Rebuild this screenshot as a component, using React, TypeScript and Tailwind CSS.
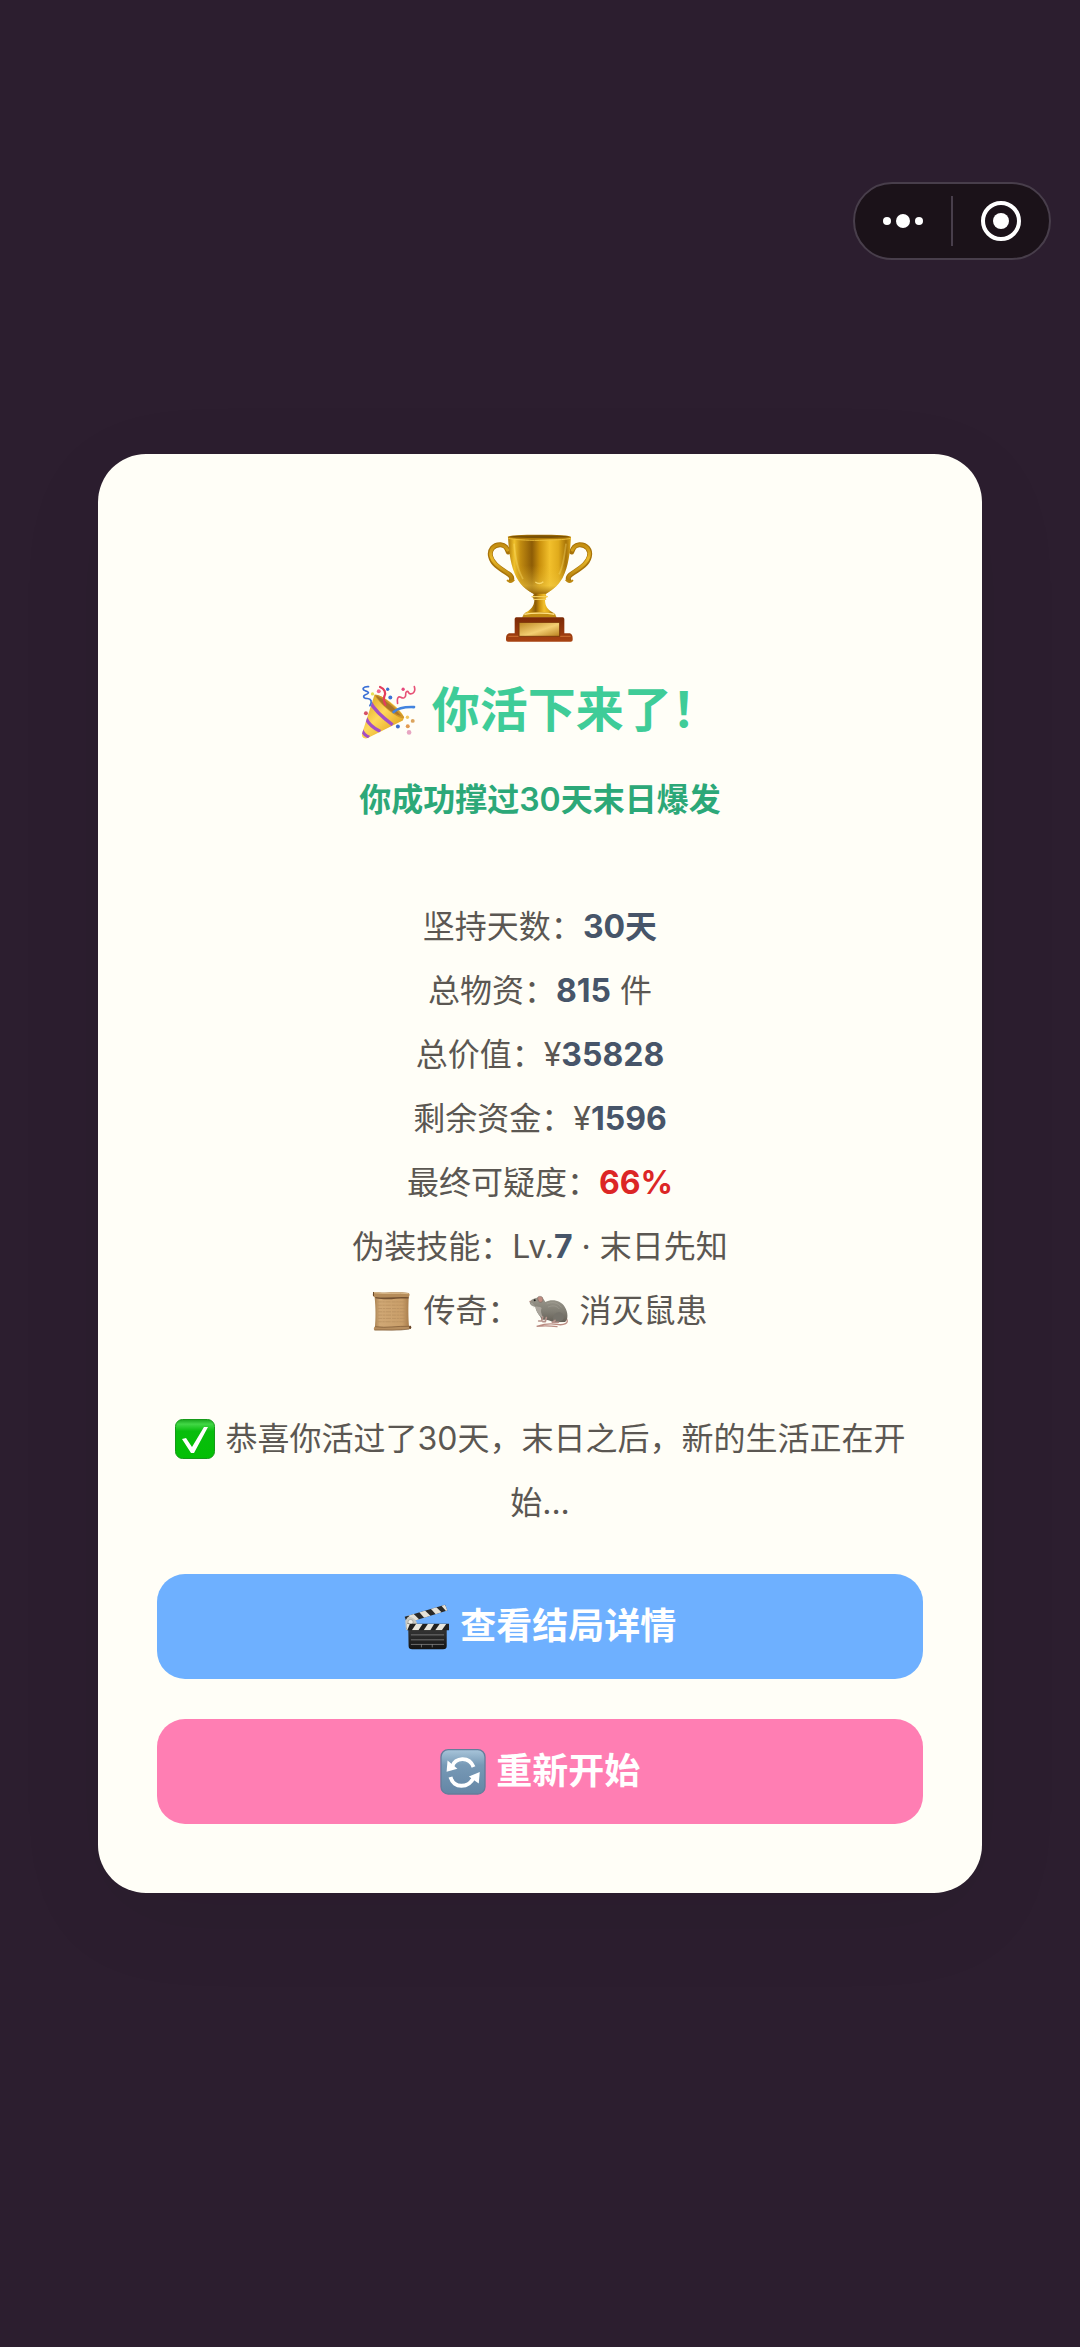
import React from "react";

interface IconProps {
  className?: string;
}

interface Stat {
  label: string;
  value: React.ReactNode;
}

const TrophyIcon: React.FC<IconProps> = ({ className }) => (
  <svg viewBox="46 40 324 330" className={className} aria-hidden="true">
    <defs>
      <linearGradient id="cup" x1="0" x2="1">
        <stop offset="0" stopColor="#b07a08" />
        <stop offset="0.1" stopColor="#f0c12c" />
        <stop offset="0.2" stopColor="#c18b10" />
        <stop offset="0.38" stopColor="#8d5c06" />
        <stop offset="0.5" stopColor="#c98f0c" />
        <stop offset="0.66" stopColor="#f2c02c" />
        <stop offset="0.8" stopColor="#e0ab1c" />
        <stop offset="0.92" stopColor="#a87407" />
        <stop offset="1" stopColor="#d9a31a" />
      </linearGradient>
      <linearGradient id="cupShade" x1="0" x2="0" y1="0" y2="1">
        <stop offset="0.5" stopColor="#e8b824" stopOpacity="0" />
        <stop offset="0.85" stopColor="#f3cc46" stopOpacity="0.5" />
        <stop offset="1" stopColor="#8f5f06" stopOpacity="0.8" />
      </linearGradient>
      <linearGradient id="handle" x1="0" x2="0" y1="0" y2="1">
        <stop offset="0" stopColor="#c38d10" />
        <stop offset="0.4" stopColor="#e9b929" />
        <stop offset="1" stopColor="#b27c0a" />
      </linearGradient>
      <linearGradient id="plate" x1="0" x2="1" y1="0" y2="1">
        <stop offset="0" stopColor="#bb8420" />
        <stop offset="0.55" stopColor="#f3cf72" />
        <stop offset="1" stopColor="#b87f1c" />
      </linearGradient>
      <linearGradient id="wood" x1="0" x2="0" y1="0" y2="1">
        <stop offset="0" stopColor="#7c2a06" />
        <stop offset="1" stopColor="#a84312" />
      </linearGradient>
    </defs>
    <g fill="none" strokeLinecap="round" strokeLinejoin="round">
      <path d="M113 97 C108 84 104 76 90 75 C68 74 55 92 60 111 C65 132 84 145 106 158 C120 166 126 174 122 181" stroke="#a87309" strokeWidth="15" />
      <path d="M111 91 C105 79 99 75 88 75 C69 75 56 92 61 110 C66 130 84 143 106 156 C120 165 124 174 121 180" stroke="url(#handle)" strokeWidth="9" />
      <path d="M303 97 C308 84 312 76 326 75 C348 74 361 92 356 111 C351 132 332 145 310 158 C296 166 290 174 294 181" stroke="#a87309" strokeWidth="15" />
      <path d="M305 91 C311 79 317 75 328 75 C347 75 360 92 355 110 C350 130 332 143 310 156 C296 165 292 174 295 180" stroke="url(#handle)" strokeWidth="9" />
      <path d="M111 183 C116 188 123 187 129 182 M305 183 C300 188 293 187 287 182" stroke="#bc870e" strokeWidth="6" />
    </g>
    <path d="M112 52 H301 C298 100 294 140 276 174 C260 203 237 215 225 223 H190 C176 215 153 203 138 174 C120 140 115 100 112 52Z" fill="url(#cup)" />
    <path d="M112 52 H301 C298 100 294 140 276 174 C260 203 237 215 225 223 H190 C176 215 153 203 138 174 C120 140 115 100 112 52Z" fill="url(#cupShade)" />
    <path d="M130 72 C134 115 139 149 157 178 M286 72 C281 115 277 143 265 164" fill="none" stroke="#ffe373" strokeWidth="5" opacity="0.35" />
    <path d="M194 187 C202 193 211 192 218 186" fill="none" stroke="#ffe27a" strokeWidth="4" opacity="0.8" />
    <ellipse cx="206" cy="52" rx="95" ry="7" fill="#ae7908" />
    <ellipse cx="206" cy="51" rx="88" ry="4" fill="#7a5105" />
    <path d="M113 56 C145 64 266 64 300 56" fill="none" stroke="#edbf3a" strokeWidth="3" />
    <path d="M190 222 H225 L228 232 L223 240 C223 260 231 270 251 281 H161 C180 270 191 260 191 240 L185 232Z" fill="url(#cup)" />
    <path d="M184 231 H230 M190 239 H225" stroke="#f4cf5c" strokeWidth="4" strokeLinecap="round" />
    <path d="M160 282 C180 276 232 276 253 282 L258 294 H154Z" fill="#c28c12" />
    <path d="M161 284 C184 279 229 279 251 284" fill="none" stroke="#ffe185" strokeWidth="4" />
    <path d="M137 293 H276 Q281 293 281 298 V341 H298 Q306 344 306 356 V361 Q306 366 300 366 H112 Q106 366 106 361 V356 Q106 344 115 341 H132 V298 Q132 293 137 293Z" fill="url(#wood)" />
    <path d="M113 350 H300" stroke="#c5662a" strokeWidth="4" />
    <rect x="145" y="308" width="122" height="42" fill="url(#plate)" stroke="#7c3709" strokeWidth="3" />
  </svg>
);

const PartyIcon: React.FC<IconProps> = ({ className }) => (
  <svg viewBox="60 64 170 168" className={className} aria-hidden="true">
    <defs>
      <linearGradient id="cone" x1="0" x2="1" y1="0" y2="1">
        <stop offset="0" stopColor="#d39a14" />
        <stop offset="0.45" stopColor="#ffd95c" />
        <stop offset="0.75" stopColor="#e8b02c" />
        <stop offset="1" stopColor="#8f5a17" />
      </linearGradient>
      <clipPath id="coneClip">
        <path d="M104 96 C126 94 180 133 194 164 L190 174 L85 226 C74 232 64 225 66 214Z" />
      </clipPath>
    </defs>
    <path d="M104 96 C126 94 180 133 194 164 L190 174 L85 226 C74 232 64 225 66 214Z" fill="url(#cone)" />
    <g clipPath="url(#coneClip)" fill="none" stroke="#a34fc4" strokeWidth="10">
      <path d="M91 118 C104 142 128 164 159 187" />
      <path d="M77 165 C85 183 100 197 122 207" />
      <path d="M65 202 C70 214 77 220 88 225" />
    </g>
    <path d="M104 96 C117 90 166 124 194 164 C189 181 118 126 104 96Z" fill="#cf962a" />
    <path d="M108 99 C120 100 162 130 184 160 C160 156 120 120 108 99Z" fill="#a8742a" />
    <g fill="none" strokeLinecap="round">
      <path d="M86 71 C70 70 64 79 75 83 C88 87 89 91 78 95 C67 99 70 107 82 107 C94 108 98 116 90 129" stroke="#3b70d6" strokeWidth="5" />
      <path d="M121 72 C136 78 139 90 134 100 C131 108 133 118 137 126" stroke="#e43e5d" strokeWidth="7" />
      <path d="M225 71 C229 84 223 93 214 93 C205 94 209 83 202 86 C194 90 204 101 194 105 C184 108 181 96 175 105 C172 110 174 116 174 122" stroke="#e75176" strokeWidth="5" />
      <path d="M162 148 C176 135 199 132 224 133" stroke="#4384df" strokeWidth="8" />
    </g>
    <circle cx="144" cy="79" r="5" fill="#396fd2" />
    <circle cx="152" cy="104" r="6" fill="#3d72d7" />
    <circle cx="191" cy="79" r="5" fill="#e6497c" />
    <circle cx="117" cy="85" r="6" fill="#f06a91" />
    <circle cx="98" cy="93" r="5" fill="#e7df55" />
    <circle cx="78" cy="152" r="6" fill="#d65266" />
    <circle cx="204" cy="164" r="5" fill="#f2c65d" />
    <circle cx="220" cy="175" r="6" fill="#dba45e" />
    <circle cx="205" cy="191" r="6" fill="#e29a50" />
    <circle cx="175" cy="192" r="6" fill="#3b6acb" />
    <circle cx="209" cy="210" r="7" fill="#e7a6c2" />
  </svg>
);

const ScrollIcon: React.FC<IconProps> = ({ className }) => (
  <svg viewBox="110 448 120 121" className={className} aria-hidden="true">
    <defs>
      <linearGradient id="paper" x1="0" x2="1">
        <stop offset="0" stopColor="#a98251" />
        <stop offset="0.15" stopColor="#d0a875" />
        <stop offset="0.8" stopColor="#c99e69" />
        <stop offset="1" stopColor="#a77c4b" />
      </linearGradient>
    </defs>
    <path d="M117 462 L221 459 C219 490 219 530 222 560 L118 562 C121 530 121 500 117 462Z" fill="url(#paper)" />
    <path d="M127 481 H212 M127 491 H212 M128 501 H212 M128 511 H212 M128 521 H212 M128 531 H212 M127 541 H213" stroke="#b58d5e" strokeWidth="2" strokeDasharray="12 2 7 2 16 3" />
    <path d="M114 451 C145 454 190 450 221 454 Q226 459 221 466 C188 463 155 472 119 467 Q111 466 112 457Z" fill="#b58c5a" />
    <path d="M119 466 C155 471 188 464 221 467 L220 471 C188 469 158 477 120 470Z" fill="#735131" />
    <path d="M114 453 C145 458 190 453 220 456" fill="none" stroke="#dab98a" strokeWidth="3" />
    <path d="M114 451 V463" stroke="#6c4928" strokeWidth="3" />
    <path d="M119 555 C155 561 190 553 226 553 Q231 559 225 563 C190 569 150 565 117 567 Q112 561 119 555Z" fill="#b78e5e" />
    <path d="M119 556 C152 561 188 553 223 555 M117 566 C150 565 190 569 222 563" fill="none" stroke="#7a5633" strokeWidth="2" />
    <ellipse cx="225" cy="558" rx="3" ry="5" fill="#68452a" />
  </svg>
);

const RatIcon: React.FC<IconProps> = ({ className }) => (
  <svg viewBox="560 456 120 120" className={className} aria-hidden="true">
    <defs>
      <linearGradient id="fur" x1="0" x2="0" y1="0" y2="1">
        <stop offset="0" stopColor="#9a978c" />
        <stop offset="0.55" stopColor="#817e74" />
        <stop offset="1" stopColor="#645f56" />
      </linearGradient>
    </defs>
    <path d="M670 535 C685 554 663 560 642 556 C620 552 602 556 583 562 C604 560 620 560 644 563" fill="none" stroke="#ba8b81" strokeWidth="4" strokeLinecap="round" />
    <path d="M562 488 C566 481 577 476 589 476 C601 475 606 482 609 489 C631 478 657 486 667 503 C678 521 678 541 668 549 L633 550 C619 541 608 543 598 542 L594 533 C586 524 580 513 579 504 C572 501 562 499 562 488Z" fill="url(#fur)" />
    <path d="M579 502 C585 504 592 502 598 507 C594 514 596 525 603 536 L596 534 C586 525 581 514 579 502Z" fill="#aaa59c" />
    <path d="M632 544 C630 522 651 513 662 526 C669 537 662 546 650 548Z" fill="#75726a" />
    <path d="M601 534 L598 546 H589 M612 536 L609 548 H602 M638 544 L630 550 H648" fill="none" stroke="#b6928a" strokeWidth="5" strokeLinecap="round" strokeLinejoin="round" />
    <path d="M586 478 C584 472 596 470 600 475 C604 482 601 489 596 490 C590 491 587 485 586 478Z" fill="#bd8c80" stroke="#7d6c65" strokeWidth="2" />
    <circle cx="577" cy="484" r="3" fill="#181716" />
    <circle cx="563" cy="487" r="2" fill="#b6817d" />
    <path d="M613 495 C630 487 648 491 657 505 M617 504 C632 498 643 500 651 510" fill="none" stroke="#aaa69c" strokeWidth="2" opacity="0.7" />
    <path d="M566 491 L575 507 M569 492 L581 508" stroke="#c9c5bb" strokeWidth="1" />
  </svg>
);

const CheckIcon: React.FC<IconProps> = ({ className }) => (
  <svg viewBox="0 0 40 40" className={className} aria-hidden="true">
    <defs>
      <linearGradient id="green" x1="0" x2="0" y1="0" y2="1">
        <stop offset="0" stopColor="#18a51d" />
        <stop offset="0.12" stopColor="#42d746" />
        <stop offset="0.3" stopColor="#08bd0d" />
        <stop offset="1" stopColor="#04bf04" />
      </linearGradient>
    </defs>
    <rect x="0.5" y="0.5" width="39" height="39" rx="7" fill="url(#green)" stroke="#159a19" />
    <path d="M7 20 L11 19 L17 28 L29 8 L33 8 L19 34 L16 34Z" fill="#fff" />
  </svg>
);

const ClapperIcon: React.FC<IconProps> = ({ className }) => (
  <svg viewBox="786 132 140 140" className={className} aria-hidden="true">
    <defs>
      <linearGradient id="board" x1="0" x2="0" y1="0" y2="1">
        <stop offset="0" stopColor="#353535" />
        <stop offset="1" stopColor="#141414" />
      </linearGradient>
      <clipPath id="armTop">
        <path d="M788 171 L911 134 L918 152 L795 190Z" />
      </clipPath>
      <clipPath id="armBottom">
        <path d="M795 192 H923 V212 H795Z" />
      </clipPath>
    </defs>
    <path d="M788 171 L911 134 L918 152 L795 190Z" fill="#292928" />
    <g clipPath="url(#armTop)" fill="#e4e1d8">
      <path d="M798 166 L814 161 L834 181 L816 188Z" />
      <path d="M832 156 L849 151 L868 169 L850 177Z" />
      <path d="M866 145 L883 140 L901 158 L884 165Z" />
      <path d="M898 135 L909 132 L923 150 L915 155Z" />
    </g>
    <path d="M790 183 L798 171 C813 171 825 181 826 195 L817 211 H792Z" fill="#c9c9c2" />
    <circle cx="806" cy="187" r="8" fill="#eeeee8" stroke="#96968f" strokeWidth="2" />
    <circle cx="797" cy="206" r="3" fill="#777" />
    <path d="M799 209 H916 V260 Q916 270 905 270 H811 Q800 270 800 260Z" fill="url(#board)" />
    <path d="M795 192 H923 V212 H795Z" fill="#20201f" />
    <g clipPath="url(#armBottom)" fill="#e7e5dc">
      <path d="M790 192 H804 L796 212 H784Z" />
      <path d="M823 192 H843 L830 212 H810Z" />
      <path d="M859 192 H878 L866 212 H846Z" />
      <path d="M895 192 H915 L901 212 H881Z" />
    </g>
    <path d="M807 226 H908 M807 241 H908 M807 255 H908 M839 255 V264 M872 255 V264" stroke="#999" strokeWidth="2" />
  </svg>
);

const RefreshIcon: React.FC<IconProps> = ({ className }) => (
  <svg viewBox="898 566 138 140" className={className} aria-hidden="true">
    <defs>
      <linearGradient id="tile" x1="0" x2="0" y1="0" y2="1">
        <stop offset="0" stopColor="#a8c5da" />
        <stop offset="0.35" stopColor="#7799b6" />
        <stop offset="1" stopColor="#6486a5" />
      </linearGradient>
    </defs>
    <rect x="900" y="568" width="134" height="135" rx="22" fill="url(#tile)" stroke="#647d9b" strokeWidth="4" />
    <g fill="none" stroke="#fff" strokeWidth="12">
      <path d="M934 620 C942 591 986 587 999 621" />
      <path d="M929 651 C938 687 984 687 1000 652" />
    </g>
    <path d="M920 601 L917 635 L950 626Z" fill="#fff" />
    <path d="M1018 636 L1015 671 L985 650Z" fill="#fff" />
  </svg>
);

const stats: Stat[] = [
  { label: "坚持天数：", value: <b className="font-bold text-[#475569]">30天</b> },
  {
    label: "总物资：",
    value: (
      <>
        <b className="font-bold text-[#475569]">815</b> 件
      </>
    ),
  },
  {
    label: "总价值：",
    value: (
      <>
        ¥<b className="font-bold text-[#475569]">35828</b>
      </>
    ),
  },
  {
    label: "剩余资金：",
    value: (
      <>
        ¥<b className="font-bold text-[#475569]">1596</b>
      </>
    ),
  },
  { label: "最终可疑度：", value: <b className="font-bold text-[#dc2626]">66%</b> },
  {
    label: "伪装技能：",
    value: (
      <>
        Lv.<b className="font-bold text-[#475569]">7</b> · 末日先知
      </>
    ),
  },
];

const Capsule: React.FC = () => (
  <div className="absolute top-[182px] right-[29px] flex h-[78px] w-[198px] items-center rounded-full border-2 border-[#483e4b] bg-[#1b1219]">
    <button type="button" aria-label="更多" className="flex h-full flex-1 items-center justify-center">
      <svg viewBox="0 0 42 16" className="h-4 w-[42px]" fill="#fff" aria-hidden="true">
        <circle cx="5" cy="8" r="4" />
        <circle cx="21" cy="8" r="7" />
        <circle cx="37" cy="8" r="4" />
      </svg>
    </button>
    <span className="h-[50px] w-[2px] bg-[#483e4b]" />
    <button type="button" aria-label="关闭" className="flex h-full flex-1 items-center justify-center">
      <svg viewBox="0 0 42 42" className="size-[42px]" aria-hidden="true">
        <circle cx="21" cy="21" r="18" fill="none" stroke="#fff" strokeWidth="4" />
        <circle cx="21" cy="21" r="8" fill="#fff" />
      </svg>
    </button>
  </div>
);

const App: React.FC = () => {
  return (
    <div
      lang="zh-CN"
      className="relative flex min-h-screen items-center bg-[#2c1e2f] px-[98px] font-['Inter','Noto_Sans_CJK_SC',sans-serif]"
    >
      <Capsule />
      <main className="w-full rounded-[48px] bg-[#fffef7] px-[59px] pt-[78px] pb-[69px] text-center shadow-[0_24px_96px_rgba(0,0,0,0.06)]">
        <TrophyIcon className="mx-auto h-28 w-[108px]" />
        <h1 className="mt-[30px] text-[48px] leading-[72px] font-bold text-[#3fcc98]">
          <PartyIcon className="mr-1 mb-1 inline-block size-14 align-middle" /> 你活下来了！
        </h1>
        <p className="mt-8 text-[32px] leading-11 font-semibold text-[#2ca878]">你成功撑过30天末日爆发</p>

        <div className="mt-[73px] text-[32px] leading-[64px] text-[#5b5752]">
          {stats.map((stat) => (
            <p key={stat.label}>
              {stat.label}
              {stat.value}
            </p>
          ))}
          <p>
            <ScrollIcon className="mr-0.5 mb-1 inline-block size-10 align-middle" /> 传奇：{" "}
            <RatIcon className="mr-0.5 mb-1 inline-block size-10 align-middle" /> 消灭鼠患
          </p>
          <p className="mt-16">
            <CheckIcon className="mr-0.5 mb-1 inline-block size-10 align-middle" /> 恭喜你活过了30天，末日之后，新的生活正在开始...
          </p>
        </div>

        <div className="mt-[39px] flex flex-col gap-10 text-[36px] font-bold text-white">
          <button type="button" className="h-[105px] rounded-[28px] bg-[#6eb0ff] pt-0.5">
            <ClapperIcon className="mr-0.5 mb-1.5 inline-block size-[46px] align-middle" /> 查看结局详情
          </button>
          <button type="button" className="h-[105px] rounded-[28px] bg-[#ff7eb3] pt-0.5">
            <RefreshIcon className="mr-0.5 mb-1.5 inline-block size-[46px] align-middle" /> 重新开始
          </button>
        </div>
      </main>
    </div>
  );
};

export default App;
